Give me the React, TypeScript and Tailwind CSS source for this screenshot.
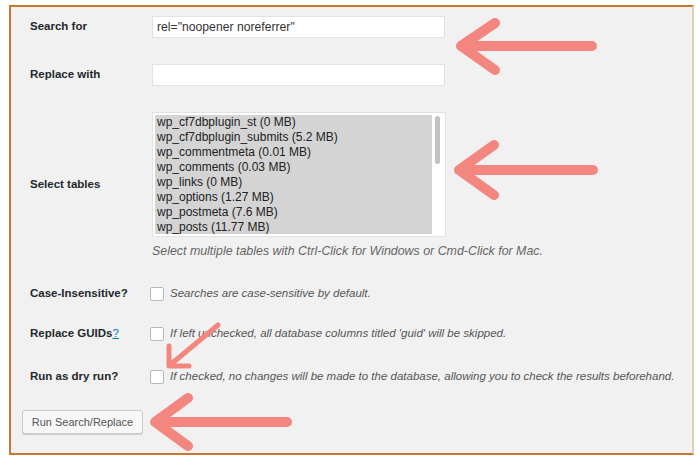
const font = { fontFamily: '"Liberation Sans", Arial, sans-serif' };

const label = "w-[122px] shrink-0 text-[11.5px] font-bold text-[#23282d]";
const note = "text-[11.5px] italic text-[#555]";

const tables = [
  "wp_cf7dbplugin_st (0 MB)",
  "wp_cf7dbplugin_submits (5.2 MB)",
  "wp_commentmeta (0.01 MB)",
  "wp_comments (0.03 MB)",
  "wp_links (0 MB)",
  "wp_options (1.27 MB)",
  "wp_postmeta (7.6 MB)",
  "wp_posts (11.77 MB)",
];

function Checkbox() {
  return (
    <span className="ml-[-2px] inline-block h-[14px] w-[14px] shrink-0 rounded-[2px] border border-[#b4b9be] bg-white" />
  );
}

function Arrows() {
  return (
    <svg
      className="pointer-events-none absolute left-0 top-0"
      width="700"
      height="465"
      viewBox="0 0 700 465"
      fill="none"
      stroke="#f3877f"
      strokeLinecap="round"
      strokeLinejoin="round"
    >
      <g strokeWidth="10">
        <path d="M592 46 L461 46 M495 23 L461 46 L495 70" />
        <path d="M593 170 L459 170 M494 145 L459 170 L494 195" />
        <path d="M287 422 L155 422 M188 398 L155 422 L188 446" />
      </g>
      <path strokeWidth="5" d="M218 325 L170 365 M169 346 L169 366 L189 366" />
    </svg>
  );
}

export default function App() {
  return (
    <div className="relative h-[465px] w-[700px] overflow-hidden bg-white" style={font}>
      <div className="ml-[9px] mt-[5px] h-[450px] w-[685px] border-2 border-[#c9772b] border-r-[#e3cdb5] bg-[#f1f1f1] pl-[19px]">
        <div className="mt-[9px] flex h-[22px] items-center">
          <span className={label}>Search for</span>
          <div className="flex h-[22px] w-[293px] items-center border border-[#e2e2e2] bg-white px-[4px] text-[12.2px] text-[#333]">
            rel="noopener noreferrer"
          </div>
        </div>

        <div className="mt-[26px] flex h-[22px] items-center">
          <span className={label}>Replace with</span>
          <div className="h-[22px] w-[293px] border border-[#e2e2e2] bg-white" />
        </div>

        <div className="mt-[26px] flex items-center">
          <span className={label}>Select tables</span>
          <div>
            <div className="flex h-[125px] w-[294px] border border-[#e2e2e2] bg-white p-[2px]">
              <div className="flex-1 bg-[#d4d4d4] pl-[2px] text-[12px] leading-[15px] text-[#222]">
                {tables.map((t) => (
                  <div key={t}>{t}</div>
                ))}
              </div>
              <div className="w-[11px] pl-[3px] pt-[1px]">
                <div className="h-[48px] w-[5px] rounded-full bg-[#c1c1c1]" />
              </div>
            </div>
            <p className="mt-[7px] text-[12.4px] italic leading-[14px] text-[#666]">
              Select multiple tables with Ctrl-Click for Windows or Cmd-Click for Mac.
            </p>
          </div>
        </div>

        <div className="mt-[29px] flex h-[14px] items-center">
          <span className={label}>Case-Insensitive?</span>
          <Checkbox />
          <span className={`${note} ml-[6px]`}>Searches are case-sensitive by default.</span>
        </div>

        <div className="mt-[26px] flex h-[14px] items-center">
          <span className={label}>
            Replace GUIDs<span className="font-normal text-[#0073aa] underline">?</span>
          </span>
          <Checkbox />
          <span className={`${note} ml-[6px]`}>
            If left unchecked, all database columns titled 'guid' will be skipped.
          </span>
        </div>

        <div className="mt-[29px] flex h-[14px] items-center">
          <span className={label}>Run as dry run?</span>
          <Checkbox />
          <span className={`${note} ml-[6px]`}>
            If checked, no changes will be made to the database, allowing you to check the results beforehand.
          </span>
        </div>

        <button
          type="button"
          className="ml-[-8px] mt-[26px] h-[24px] w-[121px] rounded-[3px] border border-[#cccccc] bg-[#f7f7f7] text-[11px] text-[#555] shadow-[0_1px_0_#ccc]"
        >
          Run Search/Replace
        </button>
      </div>
      <Arrows />
    </div>
  );
}
